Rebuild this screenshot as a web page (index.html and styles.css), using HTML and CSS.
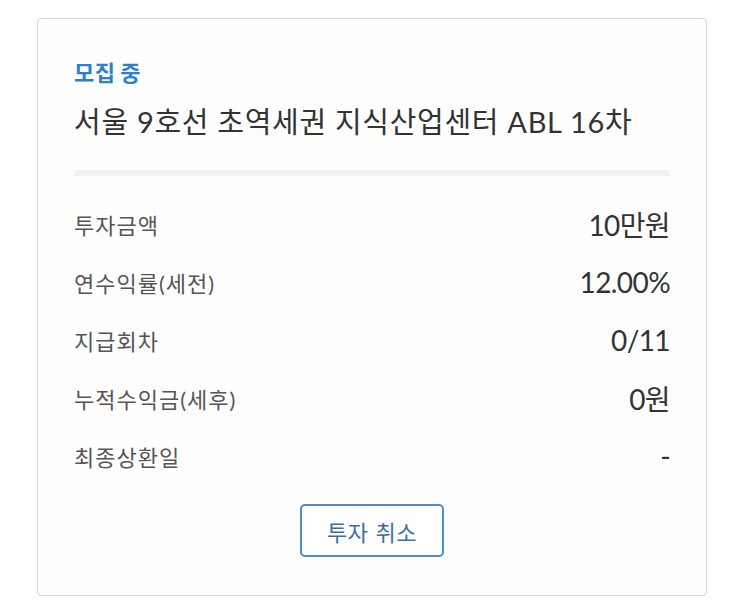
FILE: index.html
```html
<!DOCTYPE html>
<html lang="ko">
<head>
  <meta charset="UTF-8">
  <title>투자 상품</title>
  <link rel="stylesheet" href="styles.css">
</head>
<body>
  <!-- === PRODUCT CARD === -->
  <div class="card">
    <div class="status">모집 중</div>
    <h1 class="title">서울 9호선 초역세권 지식산업센터 ABL 16차</h1>
    <div class="divider"></div>

    <!-- === DETAIL ROWS === -->
    <div class="rows">
      <div class="row"><span class="label">투자금액</span><span class="value">10만원</span></div>
      <div class="row"><span class="label">연수익률(세전)</span><span class="value">12.00%</span></div>
      <div class="row"><span class="label">지급회차</span><span class="value">0/11</span></div>
      <div class="row"><span class="label">누적수익금(세후)</span><span class="value">0원</span></div>
      <div class="row"><span class="label">최종상환일</span><span class="value">-</span></div>
    </div>

    <div class="actions">
      <button class="cancel-btn">투자 취소</button>
    </div>
  </div>
</body>
</html>
```

FILE: styles.css
```css
body {
  margin: 0;
  padding: 18px 36px 0 37px;
  background: #ffffff;
  font-family: Lato, "Noto Sans CJK KR", sans-serif;
  color: #333333;
}

.card {
  height: 576px;
  border: 1px solid #d6d6d6;
  border-radius: 4px;
  padding: 0 36px;
  background: #fefefe;
}

.status {
  margin-top: 39px;
  font-size: 22px;
  font-weight: 700;
  color: #2b7fd0;
  line-height: 30px;
  letter-spacing: 0.5px;
  word-spacing: -1px;
}

.title {
  margin: 14px 0 0;
  font-size: 29px;
  font-weight: 400;
  line-height: 40px;
  color: #333333;
  letter-spacing: 0.7px;
}

.divider {
  height: 6px;
  margin-top: 28px;
  background: #f1f1f1;
}

.rows {
  margin-top: 19px;
}

.row {
  display: flex;
  justify-content: space-between;
  align-items: center;
  height: 58px;
}

.label {
  font-size: 22px;
  color: #555555;
  letter-spacing: 1px;
}

.value {
  font-size: 28px;
  color: #333333;
  letter-spacing: -0.6px;
}

.actions {
  display: flex;
  justify-content: center;
  margin-top: 19px;
}

.cancel-btn {
  width: 144px;
  height: 53px;
  border: 2px solid #4a8ccc;
  border-radius: 5px;
  background: #ffffff;
  color: #3b6f9e;
  font-family: "Noto Sans CJK KR", sans-serif;
  font-size: 22px;
  letter-spacing: 0.6px;
  cursor: pointer;
}
```
